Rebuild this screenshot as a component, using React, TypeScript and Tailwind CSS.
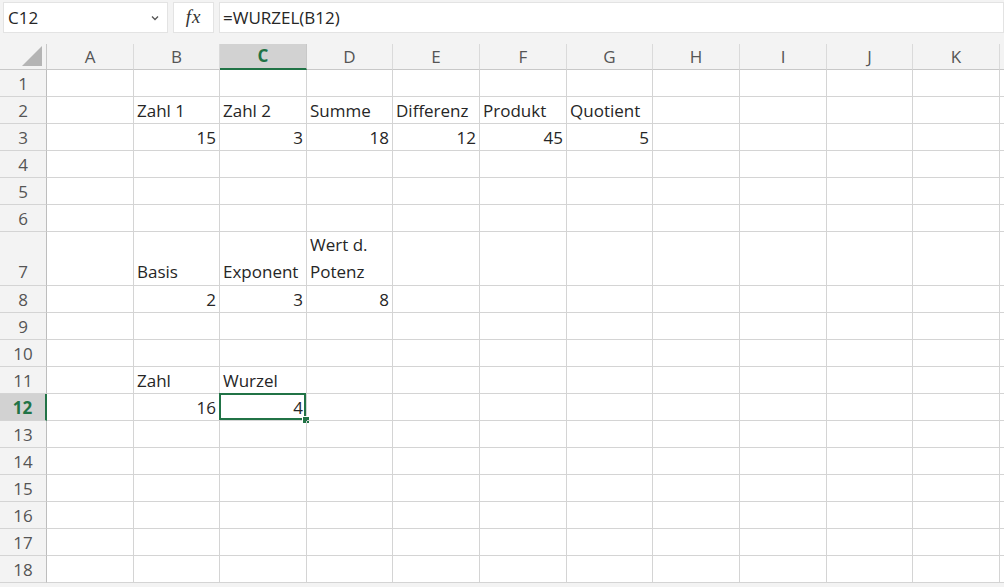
import React from "react";

const COLS = ["A", "B", "C", "D", "E", "F", "G", "H", "I", "J", "K"];
const SELECTED_COL = "C";
const SELECTED_ROW = 12;

type Cell = { v: string; num?: boolean };

const DATA: Record<number, Record<string, Cell>> = {
  2: {
    B: { v: "Zahl 1" },
    C: { v: "Zahl 2" },
    D: { v: "Summe" },
    E: { v: "Differenz" },
    F: { v: "Produkt" },
    G: { v: "Quotient" },
  },
  3: {
    B: { v: "15", num: true },
    C: { v: "3", num: true },
    D: { v: "18", num: true },
    E: { v: "12", num: true },
    F: { v: "45", num: true },
    G: { v: "5", num: true },
  },
  7: {
    B: { v: "Basis" },
    C: { v: "Exponent" },
    D: { v: "Wert d.\nPotenz" },
  },
  8: {
    B: { v: "2", num: true },
    C: { v: "3", num: true },
    D: { v: "8", num: true },
  },
  11: {
    B: { v: "Zahl" },
    C: { v: "Wurzel" },
  },
  12: {
    B: { v: "16", num: true },
    C: { v: "4", num: true },
  },
};

const ROWS = Array.from({ length: 18 }, (_, i) => i + 1);

function FormulaBar() {
  return (
    <div className="h-[36px] flex items-start pt-[2px] gap-[5px] pl-[3px]">
      <div className="w-[165px] h-[31px] bg-white border border-[#e3e3e3] flex items-center justify-between pl-[4px] pr-[5px]">
        <span className="text-[17px] text-[#262626]">C12</span>
        <svg width="10" height="10" viewBox="0 0 10 10" className="mr-[2px]">
          <path d="M2 3.5 L5 6.5 L8 3.5" fill="none" stroke="#555" strokeWidth="1.3" />
        </svg>
      </div>
      <div className="w-[41px] h-[31px] bg-white border border-[#e3e3e3] flex items-center justify-center">
        <span
          className="italic text-[19px] text-[#333] tracking-[1px]"
          style={{ fontFamily: '"Liberation Serif", "DejaVu Serif", serif' }}
        >
          fx
        </span>
      </div>
      <div className="flex-1 h-[31px] bg-white border border-[#e3e3e3] flex items-center pl-[3px]">
        <span className="text-[17px] text-[#262626]">=WURZEL(B12)</span>
      </div>
    </div>
  );
}

export default function App() {
  return (
    <div
      className="w-[1004px] h-[587px] overflow-hidden bg-[#f3f3f3] text-[#262626]"
      style={{ fontFamily: '"Open Sans", "Noto Sans", sans-serif' }}
    >
      <FormulaBar />
      <div className="h-[8px]" />
      <div className="grid grid-cols-[47px_87px_86px_87px_86px_87px_87px_86px_87px_87px_86px_87px_1fr] bg-white">
        {/* header row */}
        <div className="h-[26px] bg-[#f3f3f3] border-r border-b border-[#c8c8c8] flex items-end justify-end pr-[4px] pb-[3px]">
          <svg width="20" height="20" viewBox="0 0 20 20">
            <path d="M20 0 L20 20 L0 20 Z" fill="#b4b4b4" />
          </svg>
        </div>
        {COLS.map((c) => {
          const sel = c === SELECTED_COL;
          return (
            <div
              key={c}
              className={
                sel
                  ? "h-[26px] bg-[#d2d2d2] border-r border-[#c8c8c8] border-b-2 border-b-[#217346] flex items-center justify-center text-[17px] font-bold text-[#217346]"
                  : "h-[26px] bg-[#f3f3f3] border-r border-b border-[#dadada] border-b-[#c8c8c8] flex items-center justify-center text-[17px] text-[#555]"
              }
            >
              {c}
            </div>
          );
        })}
        <div className="h-[26px] bg-[#f3f3f3] border-b border-[#c8c8c8]" />

        {ROWS.map((r) => {
          const rowSel = r === SELECTED_ROW;
          const h = r === 7 ? "h-[54px] leading-[27px]" : "h-[27px] leading-[24px]";
          return (
            <React.Fragment key={r}>
              <div
                className={
                  rowSel
                    ? `${h} bg-[#d2d2d2] border-b border-[#d4d4d4] border-r-2 border-r-[#217346] flex items-end justify-center text-[17px] font-bold text-[#217346]`
                    : `${h} bg-[#f3f3f3] border-b border-[#d4d4d4] border-r border-r-[#bdbdbd] flex items-end justify-center text-[17px] text-[#555]`
                }
              >
                {r}
              </div>
              {COLS.map((c) => {
                const cell = DATA[r]?.[c];
                const active = rowSel && c === SELECTED_COL;
                return (
                  <div
                    key={c}
                    className={`${h} relative border-r border-b border-[#d4d4d4] flex items-end px-[3px] text-[17px] whitespace-pre-line ${
                      cell?.num ? "justify-end text-right" : "justify-start"
                    }`}
                  >
                    {cell?.v}
                    {active && (
                      <>
                        <div className="absolute -left-[1px] -top-[1px] w-[calc(100%+1px)] h-[calc(100%+1px)] border-2 border-[#217346] pointer-events-none" />
                        <div className="absolute -right-[4px] -bottom-[4px] w-[8px] h-[8px] bg-[#217346] border border-white" />
                      </>
                    )}
                  </div>
                );
              })}
              <div className={`${h} border-b border-[#d4d4d4]`} />
            </React.Fragment>
          );
        })}
      </div>
    </div>
  );
}
